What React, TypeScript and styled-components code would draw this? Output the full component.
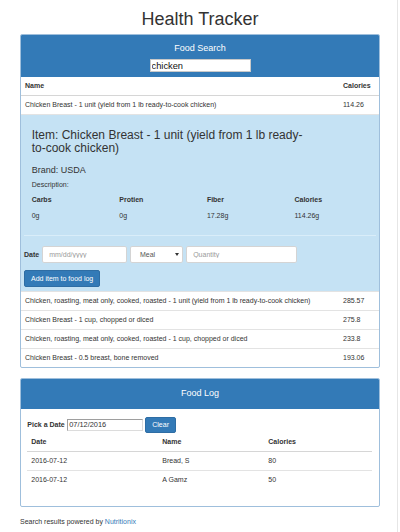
import React from "react";
import styled, { createGlobalStyle } from "styled-components";

const GlobalStyle = createGlobalStyle`
  html, body { margin: 0; padding: 0; background: #fff; }
  body {
    font-family: "Liberation Sans", Arial, Helvetica, sans-serif;
    font-size: 7px;
    line-height: 10px;
    color: #333;
  }
  * { box-sizing: border-box; }
`;

const Page = styled.div`
  width: 398px;
  min-height: 532px;
  border-right: 1px solid #e6e6e6;
  padding: 0 17px 1px 20px;
  display: flex;
  flex-direction: column;
`;

const Title = styled.h1`
  margin: 10px 0 4.2px;
  font-size: 18px;
  line-height: 19.8px;
  font-weight: 400;
  text-align: center;
  color: #333;
`;

const Panel = styled.section`
  border: 1px solid #9fbfdc;
  border-radius: 2px;
  margin-bottom: 10px;
  overflow: hidden;
  background: #fff;
`;

const PanelHeading = styled.div<{ $compact?: boolean }>`
  background: #337ab7;
  color: #fff;
  display: flex;
  flex-direction: column;
  align-items: center;
  padding: ${(p) => (p.$compact ? "10.05px 7.5px" : "9px 7.5px 4.7px")};
`;

const PanelTitle = styled.h3`
  margin: 0;
  font-size: 9px;
  line-height: 9.9px;
  font-weight: 400;
  color: #fff;
`;

const SearchInput = styled.input`
  margin-top: 5.4px;
  width: 101px;
  height: 13px;
  border: 1px solid #c9c9c9;
  padding: 0 1px;
  font-family: "Liberation Sans", Arial, sans-serif;
  font-size: 9.3px;
  color: #111;
  background: #fff;
  outline: none;
`;

const ResultRow = styled.div<{ $head?: boolean }>`
  display: grid;
  grid-template-columns: 1fr 40px;
  font-weight: ${(p) => (p.$head ? 700 : 400)};
  border-bottom: 1px solid ${(p) => (p.$head ? "#d6d6d6" : "#e3e3e3")};
  &:last-child { border-bottom: none; }
`;

const Cell = styled.div`
  padding: 4px;
  line-height: 10px;
  white-space: nowrap;
`;

const Detail = styled.div`
  display: flow-root;
  background: #c5e2f4;
  padding: 0 0 3.7px;
  border-bottom: 1px solid #e3e3e3;
`;

const Info = styled.div`
  display: flow-root;
  padding-left: 10.7px;
`;

const ItemTitle = styled.h3`
  margin: 14.2px 0 0;
  max-width: 280px;
  font-size: 12px;
  line-height: 13px;
  font-weight: 400;
  color: #333;
`;

const Brand = styled.h4`
  margin: 10.5px 0 0;
  font-size: 9px;
  line-height: 9.9px;
  font-weight: 400;
`;

const Desc = styled.p`
  margin: 4.7px 0 0;
  line-height: 10px;
`;

const NutritionGrid = styled.div`
  margin-top: 1.7px;
  display: grid;
  grid-template-columns: repeat(4, 87.6px);
`;

const NutCell = styled.div<{ $head?: boolean }>`
  padding: 3px 0;
  line-height: 10px;
  font-weight: ${(p) => (p.$head ? 700 : 400)};
`;

const Rule = styled.hr`
  margin: 11px 3px 0;
  border: none;
  border-top: 1px solid #d9edf9;
  height: 0;
`;

const FormRow = styled.div`
  margin-top: 10.5px;
  padding-left: 3px;
  display: flex;
  align-items: center;
  gap: 3px;
`;

const InlineLabel = styled.label<{ $gap?: number }>`
  font-weight: 700;
  margin-right: ${(p) => p.$gap ?? 0}px;
`;

const Field = styled.input<{ $w: number }>`
  width: ${(p) => p.$w}px;
  height: 17px;
  padding: 0 6.5px;
  border: 1px solid #d4d4d4;
  border-radius: 2px;
  background: #fff;
  font-family: "Liberation Sans", Arial, sans-serif;
  font-size: 7px;
  color: #555;
  outline: none;
  &::placeholder { color: #9a9a9a; }
`;

const FakeSelect = styled.div`
  width: 52.7px;
  height: 17px;
  padding: 0 3px 0 9px;
  border: 1px solid #d4d4d4;
  border-radius: 2px;
  background: #fff;
  display: flex;
  align-items: center;
  justify-content: space-between;
  color: #555;
`;

const Button = styled.button<{ $h: number }>`
  height: ${(p) => p.$h}px;
  padding: 0 6px;
  background: #337ab7;
  border: 1px solid #2e6da4;
  border-radius: 2px;
  color: #fff;
  font-family: "Liberation Sans", Arial, sans-serif;
  font-size: 7px;
  line-height: 10px;
  white-space: nowrap;
  cursor: pointer;
`;

const ButtonRow = styled.div`
  margin-top: 6.8px;
  padding-left: 3px;
  display: flex;
`;

const PanelBody = styled.div`
  padding: 7.7px 7.3px 7.5px 6.3px;
`;

const PickRow = styled.div`
  display: flex;
  align-items: center;
  gap: 2.6px;
`;

const DateBox = styled.input`
  width: 76px;
  height: 12.7px;
  padding: 0 1.5px;
  border: 1px solid #dcdcdc;
  border-top-color: #9e9e9e;
  border-left-color: #9e9e9e;
  background: #fff;
  font-family: "Liberation Sans", Arial, sans-serif;
  font-size: 7.4px;
  color: #333;
  outline: none;
`;

const LogTable = styled.div`
  margin-bottom: 9px;
`;

const LogRow = styled.div<{ $head?: boolean }>`
  display: grid;
  grid-template-columns: 131px 106px 1fr;
  font-weight: ${(p) => (p.$head ? 700 : 400)};
  border-bottom: 1px solid ${(p) => (p.$head ? "#d6d6d6" : "#e3e3e3")};
  &:last-child { border-bottom: none; }
`;

const Footer = styled.p`
  margin: 0;
  line-height: 10px;
  color: #333;
`;

const Link = styled.a`
  color: #337ab7;
  text-decoration: none;
`;

const results = [
  ["Chicken, roasting, meat only, cooked, roasted - 1 unit (yield from 1 lb ready-to-cook chicken)", "285.57"],
  ["Chicken Breast - 1 cup, chopped or diced", "275.8"],
  ["Chicken, roasting, meat only, cooked, roasted - 1 cup, chopped or diced", "233.8"],
  ["Chicken Breast - 0.5 breast, bone removed", "193.06"],
];

const nutrition = [
  ["Carbs", "0g"],
  ["Protien", "0g"],
  ["Fiber", "17.28g"],
  ["Calories", "114.26g"],
];

const log = [
  ["2016-07-12", "Bread, S", "80"],
  ["2016-07-12", "A Gamz", "50"],
];

export default function App() {
  return (
    <>
      <GlobalStyle />
      <Page>
        <Title>Health Tracker</Title>
        <Panel>
          <PanelHeading>
            <PanelTitle>Food Search</PanelTitle>
            <SearchInput defaultValue="chicken" />
          </PanelHeading>
          <ResultRow $head>
            <Cell>Name</Cell>
            <Cell>Calories</Cell>
          </ResultRow>
          <ResultRow>
            <Cell>Chicken Breast - 1 unit (yield from 1 lb ready-to-cook chicken)</Cell>
            <Cell>114.26</Cell>
          </ResultRow>
          <Detail>
            <Info>
              <ItemTitle>Item: Chicken Breast - 1 unit (yield from 1 lb ready-to-cook chicken)</ItemTitle>
              <Brand>Brand: USDA</Brand>
              <Desc>Description:</Desc>
              <NutritionGrid>
                {nutrition.map(([h]) => (
                  <NutCell $head key={h}>{h}</NutCell>
                ))}
                {nutrition.map(([h, v]) => (
                  <NutCell key={h + "v"}>{v}</NutCell>
                ))}
              </NutritionGrid>
            </Info>
            <Rule />
            <FormRow>
              <InlineLabel $gap={-0.5}>Date</InlineLabel>
              <Field $w={85.3} placeholder="mm/dd/yyyy" />
              <FakeSelect>
                <span>Meal</span>
                <svg width="4" height="3" viewBox="0 0 4 3">
                  <path d="M0 0 L4 0 L2 3 Z" fill="#333" />
                </svg>
              </FakeSelect>
              <Field $w={111.3} placeholder="Quantity" />
            </FormRow>
            <ButtonRow>
              <Button $h={17}>Add item to food log</Button>
            </ButtonRow>
          </Detail>
          {results.map(([n, c]) => (
            <ResultRow key={n}>
              <Cell>{n}</Cell>
              <Cell>{c}</Cell>
            </ResultRow>
          ))}
        </Panel>

        <Panel>
          <PanelHeading $compact>
            <PanelTitle>Food Log</PanelTitle>
          </PanelHeading>
          <PanelBody>
            <PickRow>
              <InlineLabel $gap={-0.6}>Pick a Date</InlineLabel>
              <DateBox defaultValue="07/12/2016" />
              <Button $h={16.7}>Clear</Button>
            </PickRow>
            <LogTable>
              <LogRow $head>
                <Cell>Date</Cell>
                <Cell>Name</Cell>
                <Cell>Calories</Cell>
              </LogRow>
              {log.map(([d, n, c]) => (
                <LogRow key={n}>
                  <Cell>{d}</Cell>
                  <Cell>{n}</Cell>
                  <Cell>{c}</Cell>
                </LogRow>
              ))}
            </LogTable>
          </PanelBody>
        </Panel>

        <Footer>
          Search results powered by <Link href="#">Nutritionix</Link>
        </Footer>
      </Page>
    </>
  );
}
